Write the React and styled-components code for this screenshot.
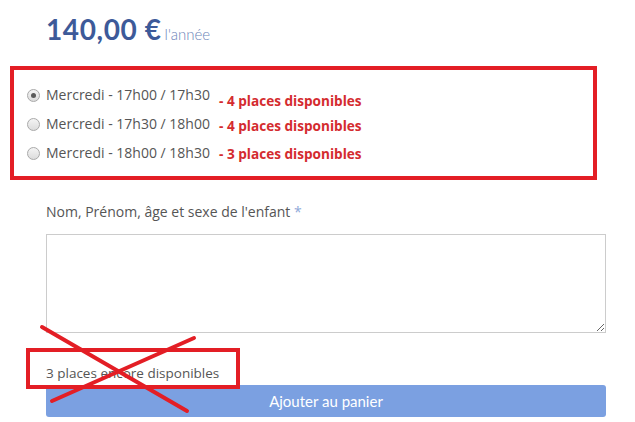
import styled, { createGlobalStyle } from 'styled-components'

const GlobalStyle = createGlobalStyle`
    body {
        margin: 0;
        background: #fff;
        font-family: "Open Sans", "Liberation Sans", sans-serif;
    }
`

const Page = styled.div`
    width: 560px;
    padding: 12px 0 0 46px;
`
const Price = styled.div`
    display: flex;
    align-items: baseline;
    gap: 3px;
    height: 54px;
`
const Amount = styled.span`
    font-family: Lato, sans-serif;
    font-weight: 700;
    font-size: 28px;
    letter-spacing: 0.6px;
    color: #3d5a99;
`
const Period = styled.span`
    font-family: Lato, sans-serif;
    font-weight: 300;
    font-size: 15px;
    color: #6b84b8;
`
const Slots = styled.div`
    margin-left: -36px;
    width: 566px;
    border: 4px solid #e31e25;
    padding: 11px 0 8px 13px;
`
const Slot = styled.label`
    display: flex;
    align-items: center;
    height: 29px;
    font-size: 14px;
    color: #555;
`
const Radio = styled.input.attrs({ type: 'radio' })`
    appearance: none;
    margin: 0 6px 0 0;
    width: 13px;
    height: 13px;
    border-radius: 50%;
    border: 1px solid #a9a9a9;
    background: linear-gradient(#f4f4f4, #dcdcdc);
    display: grid;
    place-items: center;
    &:checked::after {
        content: "";
        width: 5px;
        height: 5px;
        border-radius: 50%;
        background: #5a5a5a;
    }
`
const Left = styled.span`
    margin-right: 9px;
    position: relative;
    top: -1px;
`
const Stock = styled.span`
    font-weight: 700;
    font-size: 13.6px;
    color: #d42b2f;
    position: relative;
    top: ${p => p.$drop}px;
`
const Label = styled.div`
    margin-top: 22px;
    font-size: 14px;
    line-height: 20px;
    color: #555;
`
const Star = styled.span`
    color: #8ea8d8;
`
const Area = styled.textarea`
    display: block;
    box-sizing: border-box;
    margin-top: 12px;
    width: 560px;
    height: 99px;
    border: 1px solid #ccc;
    resize: vertical;
    font-family: inherit;
`
const Note = styled.div`
    position: relative;
    z-index: 1;
    margin: 15px 0 0 -20px;
    width: 190px;
    border: 4px solid #e31e25;
    padding: 11px 0 2px 16px;
    font-size: 13.5px;
    line-height: 20px;
    color: #555;
`
const Cross = styled.svg`
    position: absolute;
    left: -4px;
    top: -30px;
    overflow: visible;
`
const AddButton = styled.button`
    display: block;
    margin-top: -4px;
    width: 560px;
    height: 32px;
    border: none;
    border-radius: 3px;
    background: #7ba0e1;
    color: #fff;
    font-family: Lato, sans-serif;
    font-size: 15px;
`

const slots = [
    { time: '17h00 / 17h30', left: 4, drop: 5, checked: true },
    { time: '17h30 / 18h00', left: 4, drop: 1 },
    { time: '18h00 / 18h30', left: 3, drop: 0 },
]

export default function App() {
    return (
        <Page>
            <GlobalStyle />
            <Price>
                <Amount>140,00 €</Amount>
                <Period>l'année</Period>
            </Price>
            <Slots>
                {slots.map(s => (
                    <Slot key={s.time}>
                        <Radio name="slot" defaultChecked={s.checked} />
                        <Left>Mercredi - {s.time}</Left>
                        <Stock $drop={s.drop}>- {s.left} places disponibles</Stock>
                    </Slot>
                ))}
            </Slots>
            <Label>Nom, Prénom, âge et sexe de l'enfant <Star>*</Star></Label>
            <Area />
            <Note>
                3 places encore disponibles
                <Cross width="200" height="100">
                    <g stroke="#e31e25" strokeWidth="4" strokeLinecap="round">
                        <line x1="16" y1="5" x2="161" y2="89" />
                        <line x1="26" y1="79" x2="168" y2="16" />
                    </g>
                </Cross>
            </Note>
            <AddButton>Ajouter au panier</AddButton>
        </Page>
    )
}
